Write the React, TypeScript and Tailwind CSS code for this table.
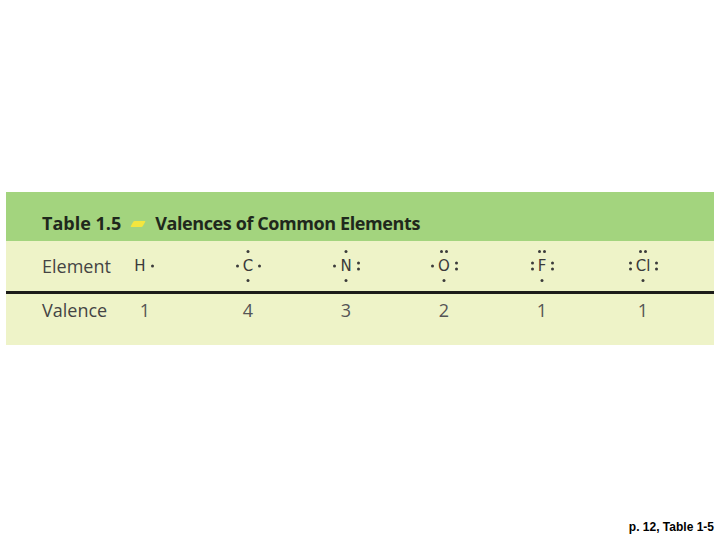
import React from 'react';

type DotCount = 0 | 1 | 2;

interface LewisProps {
  symbol: string;
  top?: DotCount;
  bottom?: DotCount;
  left?: DotCount;
  right?: DotCount;
}

const Dot = () => <span className="block h-[3px] w-[3px] rounded-full bg-[#3b3b3b]" />;

const dots = (n: DotCount) => Array.from({ length: n }, (_, i) => <Dot key={i} />);

// Electron-dot symbol: letter with dots placed round it
const Lewis: React.FC<LewisProps> = ({ symbol, top = 0, bottom = 0, left = 0, right = 0 }) => (
  <span className="relative inline-block text-[15px] leading-[15px] text-[#3a3a3a]" style={{ fontFamily: '"DejaVu Sans", sans-serif' }}>
    {symbol}
    {top > 0 && (
      <span className="absolute left-1/2 top-[-9px] flex -translate-x-1/2 gap-[2px]">{dots(top)}</span>
    )}
    {bottom > 0 && (
      <span className="absolute bottom-[-8px] left-1/2 flex -translate-x-1/2 gap-[2px]">{dots(bottom)}</span>
    )}
    {left > 0 && (
      <span className="absolute right-full top-1/2 mr-[4px] flex -translate-y-1/2 flex-col gap-[3px]">{dots(left)}</span>
    )}
    {right > 0 && (
      <span className="absolute left-full top-1/2 ml-[5px] flex -translate-y-1/2 flex-col gap-[3px]">{dots(right)}</span>
    )}
  </span>
);

const elements: { lewis: LewisProps; valence: number }[] = [
  { lewis: { symbol: 'H', right: 1 }, valence: 1 },
  { lewis: { symbol: 'C', top: 1, bottom: 1, left: 1, right: 1 }, valence: 4 },
  { lewis: { symbol: 'N', top: 1, bottom: 1, left: 1, right: 2 }, valence: 3 },
  { lewis: { symbol: 'O', top: 2, bottom: 1, left: 1, right: 2 }, valence: 2 },
  { lewis: { symbol: 'F', top: 2, bottom: 1, left: 2, right: 2 }, valence: 1 },
  { lewis: { symbol: 'Cl', top: 2, bottom: 1, left: 2, right: 2 }, valence: 1 },
];

const cols = 'grid grid-cols-[49px_108px_98px_98px_98px_98px_104px] pl-[36px]';

export default function App() {
  return (
    <div className="flex h-[540px] w-[720px] flex-col bg-white" style={{ fontFamily: '"Open Sans", sans-serif' }}>
      <div className="mx-[6px] mt-[192px] w-[708px]">
        {/* title bar */}
        <div className="h-[49px] bg-[#a3d47e] pl-[36px] pt-[19px]">
          <div className="flex items-center text-[18px] font-bold leading-[24px] text-[#1f281c]">
            <span>Table 1.5</span>
            <span className="mx-[11px] mt-[2px] h-[6px] w-[12px] -skew-x-[30deg] rounded-[1px] bg-[#f3e63f]" />
            <span className="tracking-[-0.4px]">Valences of Common Elements</span>
          </div>
        </div>

        <div className="bg-[#eef3c8]">
          <div className={`${cols} h-[50px] items-center`}>
            <span className="whitespace-nowrap text-[18px] leading-[24px] text-[#444]">Element</span>
            {elements.map((el, i) => (
              <div key={i} className={i === 0 ? 'flex justify-center pr-[10px]' : 'flex justify-center'}>
                <Lewis {...el.lewis} />
              </div>
            ))}
          </div>

          <div className="h-[3px] bg-[#1c1c1a]" />

          <div className={`${cols} h-[51px] items-start pt-[4px]`}>
            <span className="whitespace-nowrap text-[18px] leading-[24px] text-[#444]">Valence</span>
            {elements.map((el, i) => (
              <span key={i} className="text-center text-[18px] leading-[24px] text-[#555]">
                {el.valence}
              </span>
            ))}
          </div>
        </div>
      </div>

      <div className="mt-auto flex justify-end pb-[5px] pr-[6px]">
        <span className="text-[12px] font-bold leading-[15px] text-black" style={{ fontFamily: '"Liberation Sans", Arial, sans-serif' }}>
          p. 12, Table 1-5
        </span>
      </div>
    </div>
  );
}
